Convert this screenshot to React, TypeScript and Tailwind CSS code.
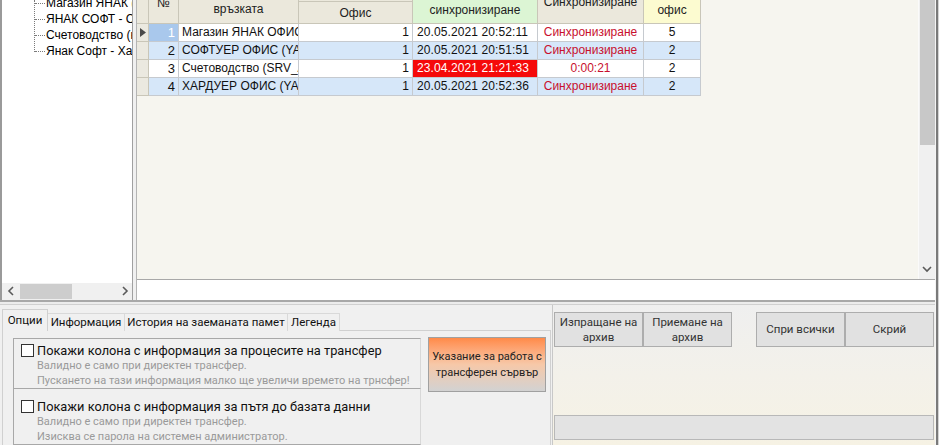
import React from "react";

const rows = [
  { n: "1", name: "Магазин ЯНАК ОФИС (YASEN)", of: "1", date: "20.05.2021 20:52:11", sync: "Синхронизиране", off: "5", blue: false, sel: true, red: false },
  { n: "2", name: "СОФТУЕР ОФИС (YASEN)", of: "1", date: "20.05.2021 20:51:51", sync: "Синхронизиране", off: "2", blue: true, sel: false, red: false },
  { n: "3", name: "Счетоводство (SRV_ACC)", of: "1", date: "23.04.2021 21:21:33", sync: "0:00:21", off: "2", blue: false, sel: false, red: true },
  { n: "4", name: "ХАРДУЕР ОФИС (YASEN)", of: "1", date: "20.05.2021 20:52:36", sync: "Синхронизиране", off: "2", blue: true, sel: false, red: false },
];

const treeItems = [
  "Магазин ЯНАК (компютър)",
  "ЯНАК СОФТ - Софтуер",
  "Счетоводство (компютър)",
  "Янак Софт - Хардуер",
];

function Chev({ dir }: { dir: "l" | "r" | "d" }) {
  const d = dir === "l" ? "M6 1 L2 5 L6 9" : dir === "r" ? "M2 1 L6 5 L2 9" : "M1 2 L5 6 L9 2";
  return (
    <svg width={dir === "d" ? 10 : 8} height={dir === "d" ? 8 : 10} viewBox={dir === "d" ? "0 0 10 8" : "0 0 8 10"}>
      <path d={d} fill="none" stroke="#5a5a5a" strokeWidth="1.6" />
    </svg>
  );
}

export default function App() {
  const tableFont = { fontFamily: '"Liberation Sans", Arial, sans-serif' };
  const uiFont = { fontFamily: 'Roboto, "Noto Sans", sans-serif' };
  const cellB = "border-r border-b border-[#c6cacf]";
  const headB = "border-r border-b border-[#c9c6b8]";
  return (
    <div className="w-[939px] h-[445px] overflow-hidden flex bg-[#f0f0f0]" style={tableFont}>
      <div className="flex-1 flex flex-col min-w-0">
        {/* TOP */}
        <div className="h-[300px] flex">
          <div className="w-[2px] bg-[#9a9a9a]" />
          {/* tree panel */}
          <div className="w-[131px] flex flex-col border-r border-[#a0a0a0]">
            <div className="flex-1 bg-white relative overflow-hidden">
              <div className="absolute left-[32px] top-0 h-[52px] border-l border-dotted border-[#7a7a7a]" />
              <div className="-mt-[5px] flex flex-col">
                {treeItems.map((t) => (
                  <div key={t} className="h-[16px] flex items-center whitespace-nowrap">
                    <div className="shrink-0 ml-[33px] w-[10px] border-t border-dotted border-[#7a7a7a]" />
                    <span className="shrink-0 ml-[1px] text-[12px] leading-[14px] text-black">{t}</span>
                  </div>
                ))}
              </div>
            </div>
            <div className="h-[16px] bg-[#f0f0f0] flex items-center mb-[1px]">
              <div className="w-[18px] flex justify-center"><Chev dir="l" /></div>
              <div className="w-[52px] h-[15px] bg-[#cdcdcd]" />
              <div className="flex-1" />
              <div className="w-[14px] flex justify-center"><Chev dir="r" /></div>
            </div>
          </div>
          <div className="w-[4px] bg-[#f0f0f0] border-r border-[#b4b4b4]" />
          {/* grid area */}
          <div className="flex-1 flex flex-col min-w-0">
            <div className="h-[280px] flex border-b border-[#a8a8a8]">
              <div className="flex-1 bg-[#f6f5ef] overflow-hidden">
                <div className="grid grid-cols-[12px_30px_120px_114px_125px_106px_57px] w-fit">
                  {/* header */}
                  <div className={`h-[24px] bg-[#ebe8dc] ${headB}`} />
                  <div className={`h-[24px] bg-[#ebe8dc] ${headB} relative overflow-hidden`}>
                    <span className="absolute left-[8px] -top-[6px] text-[12px] text-[#222]">№</span>
                  </div>
                  <div className={`h-[24px] bg-[#ebe8dc] ${headB} text-center text-[12px] leading-[14px] pt-[2px] text-[#222]`}>връзката</div>
                  <div className={`h-[24px] bg-[#ebe8dc] ${headB} pt-[1px]`}>
                    <div className="h-full border-t border-[#c9c6b8] text-center text-[12px] leading-[14px] pt-[4px] text-[#222]">Офис</div>
                  </div>
                  <div className={`h-[24px] bg-[#dcf5d4] ${headB} text-center text-[12px] leading-[14px] pt-[3px] text-[#222]`}>синхронизиране</div>
                  <div className={`h-[24px] bg-[#ebe8dc] ${headB} relative overflow-hidden`}>
                    <span className="absolute left-0 right-0 text-center -top-[5px] text-[12px] leading-[14px] text-[#222]">Синхронизиране</span>
                  </div>
                  <div className={`h-[24px] bg-[#fcfbd0] ${headB} text-center text-[12px] leading-[14px] pt-[3px] text-[#222]`}>офис</div>
                  {/* rows */}
                  {rows.map((r) => {
                    const bg = r.blue ? "bg-[#d6e7f9]" : "bg-white";
                    return (
                      <React.Fragment key={r.n}>
                        <div className={`h-[18px] bg-[#ebe9e0] ${headB} flex items-center justify-center`}>
                          {r.sel && (
                            <svg width="6" height="9" viewBox="0 0 6 9"><polygon points="0,0 6,4.5 0,9" fill="#4a4a4a" /></svg>
                          )}
                        </div>
                        <div className={`h-[18px] ${r.sel ? "bg-[#a9c8ec] text-white" : bg + " text-[#111]"} ${cellB} text-right pr-[3px] text-[13px] leading-[17px]`}>{r.n}</div>
                        <div className={`h-[18px] ${bg} ${cellB} pl-[3px] text-[12px] leading-[17px] text-[#111] whitespace-nowrap overflow-hidden`}>{r.name}</div>
                        <div className={`h-[18px] ${bg} ${cellB} pr-[3px] text-right text-[12px] leading-[17px] text-[#111]`}>{r.of}</div>
                        <div className={`h-[18px] ${r.red ? "bg-[#f50a0a] text-white" : bg + " text-[#111]"} ${cellB} pl-[4px] text-[12px] leading-[17px] tracking-[0.1px] whitespace-nowrap overflow-hidden`}>{r.date}</div>
                        <div className={`h-[18px] ${bg} ${cellB} text-center text-[12px] leading-[17px] text-[#c8102e] whitespace-nowrap overflow-hidden`}>{r.sync}</div>
                        <div className={`h-[18px] ${bg} ${cellB} text-center text-[12px] leading-[17px] text-[#111]`}>{r.off}</div>
                      </React.Fragment>
                    );
                  })}
                </div>
              </div>
              {/* vscroll */}
              <div className="w-[17px] bg-[#f0f0f0] border-l border-[#fafafa] flex flex-col">
                <div className="h-[145px] ml-[1px] bg-[#c8c8c8]" />
                <div className="flex-1" />
                <div className="h-[16px] flex items-center justify-center mb-[2px]"><Chev dir="d" /></div>
              </div>
            </div>
            <div className="flex-1 bg-white" />
          </div>
        </div>
        {/* divider */}
        <div className="h-[5px] border-t-2 border-[#a8a8a8] border-b border-b-[#d0d0d0] bg-[#ececec]" />
        {/* BOTTOM */}
        <div className="flex-1 flex min-h-0">
          {/* tabs */}
          <div className="w-[551px] flex flex-col pl-[2px] pt-[4px]" style={uiFont}>
            <div className="flex items-end h-[22px] text-[11.5px] text-[#111] relative z-10 whitespace-nowrap">
              <div className="h-[22px] w-[46px] bg-[#f0f0f0] border border-b-0 border-[#d0d0d0] flex items-start pt-[2px] justify-center">Опции</div>
              <div className="h-[18px] w-[77px] bg-[#f0f0f0] border-t border-r border-[#d9d9d9] flex items-center justify-center">Информация</div>
              <div className="h-[18px] w-[163px] bg-[#f0f0f0] border-t border-r border-[#d9d9d9] flex items-center justify-center">История на заеманата памет</div>
              <div className="h-[18px] w-[52px] bg-[#f0f0f0] border-t border-r border-[#d9d9d9] flex items-center justify-center">Легенда</div>
            </div>
            <div className="flex-1 -mt-[1px] border border-[#d0d0d0] bg-[#f0f0f0] flex pl-[10px] pt-[7px] gap-[7px]">
              <div className="w-[408px] flex flex-col">
                <div className="h-[51px] border border-[#a8a8a8] border-r-[#d8d8d8] pl-[7px] pt-[4px]">
                  <div className="flex items-center h-[15px]">
                    <div className="shrink-0 w-[13px] h-[13px] bg-white border border-[#333]" />
                    <span className="ml-[3px] text-[12.8px] leading-[15px] text-[#111] whitespace-nowrap">Покажи колона с информация за процесите на трансфер</span>
                  </div>
                  <div className="pl-[16px] text-[11px] leading-[15px] text-[#9a9a9a] whitespace-nowrap">Валидно е само при директен трансфер.</div>
                  <div className="pl-[16px] text-[11px] leading-[15px] text-[#9a9a9a] whitespace-nowrap">Пускането на тази информация малко ще увеличи времето на трнсфер!</div>
                </div>
                <div className="flex-1 border border-t-0 border-[#a8a8a8] border-r-[#d8d8d8] pl-[7px] pt-[10px]">
                  <div className="flex items-center h-[15px]">
                    <div className="shrink-0 w-[13px] h-[13px] bg-white border border-[#333]" />
                    <span className="ml-[3px] text-[12.8px] leading-[15px] text-[#111] whitespace-nowrap">Покажи колона с информация за пътя до базата данни</span>
                  </div>
                  <div className="pl-[16px] text-[11px] leading-[15px] text-[#9a9a9a] whitespace-nowrap">Валидно е само при директен трансфер.</div>
                  <div className="pl-[16px] text-[11px] leading-[15px] text-[#9a9a9a] whitespace-nowrap">Изисква се парола на системен администратор.</div>
                </div>
              </div>
              <div className="w-[118px] h-[55px] mt-[-1px] border border-[#a0a0a0] bg-gradient-to-b from-[#ff8a48] via-[#f6c8a8] to-[#d2d2d2] flex flex-col items-center justify-center text-[11px] leading-[16px] text-[#222] whitespace-nowrap">
                <span>Указание за работа с</span>
                <span>трансферен сървър</span>
              </div>
            </div>
          </div>
          {/* right panel */}
          <div className="flex-1 ml-[1px] border-l border-[#c8c8c8] bg-gradient-to-b from-[#efefef] via-[#f3f1ea] to-[#f6f2e4] flex flex-col pl-[1px] pt-[7px] pr-[1px]" style={uiFont}>
            <div className="flex text-[11.5px] leading-[15px] text-[#333] whitespace-nowrap">
              <div className="w-[89px] h-[35px] bg-[#e1e1e1] border border-[#adadad] flex flex-col items-center justify-center"><span>Изпращане на</span><span>архив</span></div>
              <div className="w-[89px] h-[35px] bg-[#e1e1e1] border border-[#adadad] flex flex-col items-center justify-center"><span>Приемане на</span><span>архив</span></div>
              <div className="w-[24px]" />
              <div className="w-[89px] h-[35px] bg-[#e1e1e1] border border-[#adadad] flex items-center justify-center">Спри всички</div>
              <div className="w-[89px] h-[35px] bg-[#e1e1e1] border border-[#adadad] flex items-center justify-center">Скрий</div>
            </div>
            <div className="flex-1" />
            <div className="h-[25px] mb-[5px] bg-[#e3e3e3] border border-[#b8b8b8]" />
          </div>
        </div>
      </div>
      <div className="w-[4px] h-full flex">
        <div className="w-[1px] bg-[#f4f4f4]" />
        <div className="w-[2px] bg-[#7a7a7a]" />
        <div className="w-[1px] bg-[#d4d4d4]" />
      </div>
    </div>
  );
}
